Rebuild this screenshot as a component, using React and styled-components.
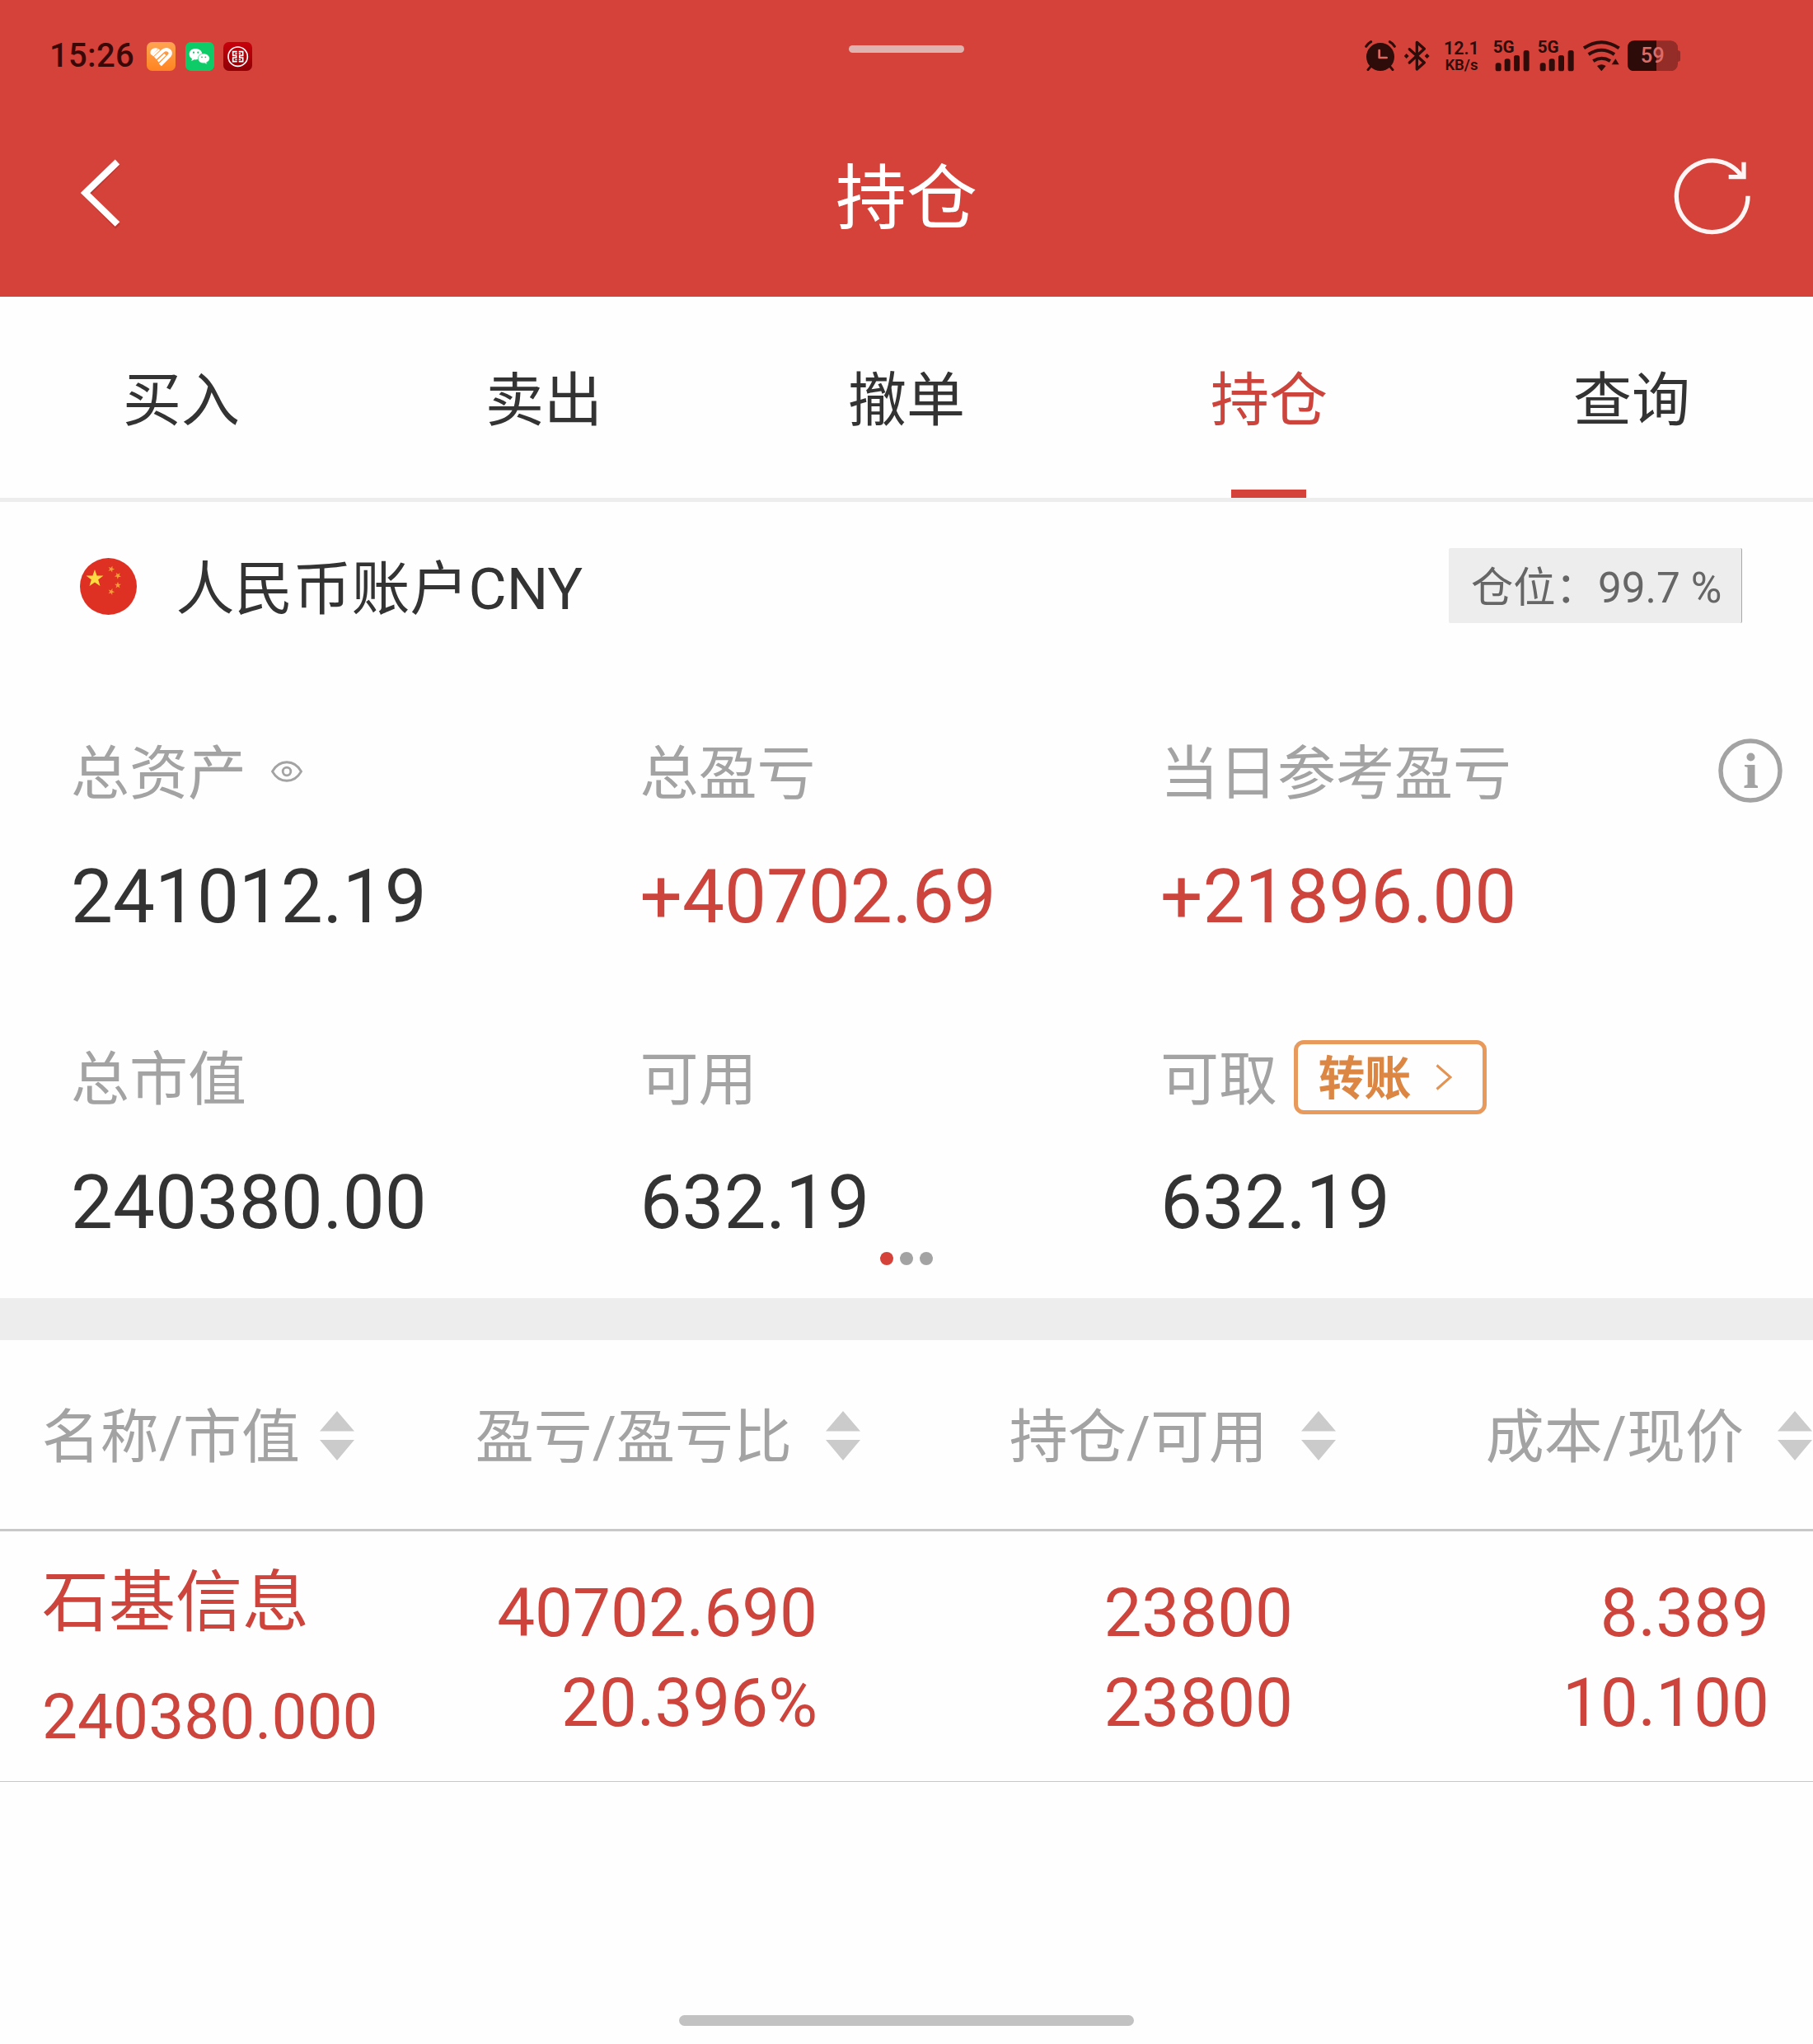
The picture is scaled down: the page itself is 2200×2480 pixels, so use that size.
import React from "react";
import styled, { createGlobalStyle } from "styled-components";

const palette = {
  brand: "#d5423a",
  rise: "#cd443c",
  ink: "#333333",
  muted: "#a3a3a3",
  band: "#ededed",
  orange: "#e79a5b",
  status: "#2d0c09",
};

const GlobalStyle = createGlobalStyle`
  * { box-sizing: border-box; }
  body {
    margin: 0;
    background: #fefefe;
    font-family: Roboto, "Noto Sans CJK SC", sans-serif;
    color: ${palette.ink};
  }
  svg { display: block; flex: none; }
`;

const Screen = styled.div`
  display: flex;
  flex-direction: column;
  width: 2200px;
  height: 2480px;
  overflow: hidden;
  background: #fefefe;
`;

/* ---------- header ---------- */

const Header = styled.header`
  height: 360px;
  background: ${palette.brand};
`;

const StatusBar = styled.div`
  display: grid;
  grid-template-columns: 1fr 140px 1fr;
  height: 120px;
`;

const StatusLeft = styled.div`
  display: flex;
  align-items: center;
  height: 38px;
  margin-top: 49px;
  padding-left: 60px;
`;

const Clock = styled.span`
  width: 118px;
  font-size: 40px;
  font-weight: 500;
  line-height: 38px;
  letter-spacing: 0.3px;
  color: #3a0806;
`;

const AppIcons = styled.div`
  display: flex;
  gap: 11.5px;
`;

const Handle = styled.div`
  width: 140px;
  height: 9px;
  margin-top: 54.5px;
  border-radius: 5px;
  background: #dfb3b0;
`;

const StatusRight = styled.div`
  display: flex;
  justify-content: flex-end;
  align-items: flex-start;
  height: 38px;
  margin-top: 48.67px;
  padding-right: 161px;
`;

const Speed = styled.div`
  display: flex;
  flex-direction: column;
  align-items: center;
  width: 39px;
  margin: 0 19.5px 0 19px;
  font-size: 21.5px;
  font-weight: 600;
  line-height: 20px;
  white-space: nowrap;
  color: ${palette.status};
`;

const SpeedUnit = styled.div`
  font-size: 18.5px;
`;

const Spacer = styled.div`
  width: ${(p) => p.$w}px;
`;

const TitleBar = styled.div`
  display: grid;
  grid-template-columns: 300px 1fr 300px;
  height: 240px;
`;

const IconButton = styled.div`
  padding: ${(p) => p.$pad};
`;

const Title = styled.h1`
  margin: 0;
  font-size: 86px;
  font-weight: 400;
  line-height: 243px;
  text-align: center;
  color: #fff;
`;

/* ---------- tabs ---------- */

const Tabs = styled.nav`
  display: grid;
  grid-template-columns: repeat(5, 1fr);
  height: 249px;
  border-bottom: 5px solid #ededed;
`;

const Tab = styled.div`
  display: flex;
  flex-direction: column;
  justify-content: space-between;
  align-items: center;
  font-size: 71px;
  line-height: 234px;
  padding-top: 9px;
  height: 244px;
  color: ${(p) => (p.$active ? palette.rise : palette.ink)};

  &::after {
    content: "";
    flex: none;
    width: 91px;
    height: 10px;
    margin: -9px 1px 0 0;
    background: ${(p) => (p.$active ? palette.brand : "transparent")};
  }
`;

/* ---------- account ---------- */

const AccountRow = styled.div`
  display: flex;
  align-items: center;
  height: 211px;
  padding: 0 86px 0 97px;

  > svg { margin-top: -6px; }
`;

const AccountName = styled.div`
  flex: 1;
  margin-left: 47.5px;
  font-size: 71px;
  line-height: 100px;
`;

const PositionBadge = styled.div`
  width: 356px;
  height: 91px;
  padding-left: 27px;
  margin-top: -8px;
  border-right: 1px solid #a8a8a8;
  border-radius: 2px;
  background: ${palette.band};
  font-size: 51.3px;
  line-height: 97px;
  white-space: pre;
  color: #666;
`;

const Metrics = styled.section`
  display: grid;
  grid-template-columns: 690.5px 631.5px 1fr;
  row-gap: 122px;
  padding: 69px 37px 0 86px;
`;

const Metric = styled.div`
  display: flex;
  flex-direction: column;
  gap: 49px;
`;

const MetricLabel = styled.div`
  display: flex;
  align-items: center;
  height: 100px;
  font-size: 71px;
  line-height: 100px;
  color: ${palette.muted};
`;

const MetricValue = styled.div`
  font-size: 90.7px;
  line-height: 100px;
  color: ${(p) => (p.$rise ? palette.rise : palette.ink)};
`;

const EyeSlot = styled.div`
  margin: -6px 0 0 30px;
`;

const InfoSlot = styled.div`
  margin: -8px 0 0 auto;
`;

const TransferButton = styled.div`
  display: flex;
  align-items: center;
  gap: 30px;
  width: 234px;
  height: 90px;
  margin: -6px 0 0 20px;
  padding-left: 25px;
  border: 5px solid ${palette.orange};
  border-radius: 12px;
  font-size: 56px;
  font-weight: 500;
  line-height: 80px;
  color: #dc8643;
`;

const TransferText = styled.span`
  padding-top: 4px;
  -webkit-text-stroke: 1.2px #dc8643;
`;

const Pager = styled.div`
  display: flex;
  justify-content: center;
  gap: 8px;
  height: 66px;
  padding-top: 10px;
`;

const Dot = styled.span`
  width: 16px;
  height: 16px;
  border-radius: 50%;
  background: ${(p) => (p.$active ? palette.brand : palette.muted)};
`;

const Band = styled.div`
  height: 51px;
  background: ${palette.band};
`;

/* ---------- holdings table ---------- */

const columns = "430px 614px 577px 578px";

const TableHead = styled.div`
  display: grid;
  grid-template-columns: ${columns};
  height: 232px;
  padding-top: 7px;
  border-bottom: 3px solid #c8c8c8;
`;

const HeadCell = styled.div`
  display: flex;
  justify-content: flex-end;
  align-items: center;
  gap: ${(p) => (p.$tight ? 24 : 41)}px;
  font-size: 71px;
  line-height: 222px;
  white-space: nowrap;
  color: ${palette.muted};

  > svg { margin-top: -5px; }
`;

const HoldingRow = styled.div`
  display: grid;
  grid-template-columns: ${columns};
  height: 304px;
  border-bottom: 1px solid #c8c8c8;
  color: ${palette.rise};
`;

const NameCell = styled.div`
  padding: 18px 0 0 51px;
  line-height: 138px;
  white-space: nowrap;
`;

const StockName = styled.div`
  font-size: 81px;
`;

const StockWorth = styled.div`
  font-size: 76.6px;
`;

const NumberCell = styled.div`
  padding: 45px 52px 0 0;
  font-size: 81.7px;
  line-height: 109px;
  text-align: right;
`;

const Footer = styled.div`
  display: flex;
  flex: 1;
  justify-content: center;
  align-items: flex-end;
  padding-bottom: 22px;
`;

const HomeBar = styled.div`
  width: 552px;
  height: 13px;
  border-radius: 7px;
  background: #c2c2c2;
`;

/* ---------- drawings ---------- */

const HeartAppIcon = () => (
  <svg width="35" height="35" viewBox="0 0 105 105">
    <defs>
      <linearGradient id="sun" x1="0" y1="0" x2="0" y2="1">
        <stop offset="0" stopColor="#ffa552" />
        <stop offset="1" stopColor="#ff8420" />
      </linearGradient>
    </defs>
    <rect width="105" height="105" rx="20" fill="url(#sun)" />
    <path d="M15 45 C8 30 24 16 42 24 L20 48Z" fill="#fff" />
    <path d="M31 58 L58 33 C72 20 95 34 83 49 L49 83" fill="none" stroke="#fff" strokeWidth="13" />
    <path d="M41 70 L67 45" fill="none" stroke="#fff" strokeWidth="9" />
    <path d="M22 50 L46 27" fill="none" stroke="#fff" strokeWidth="7" />
  </svg>
);

const ChatAppIcon = () => (
  <svg width="35" height="35" viewBox="0 0 105 105">
    <rect width="105" height="105" rx="20" fill="#0dcb67" />
    <path d="M37 24 C24 24 14 32 14 44 C14 51 18 57 24 60 L22 69 L32 64 C42 66 62 60 61 43 C60 31 49 24 37 24Z" fill="#fff" />
    <path d="M67 42 C55 42 46 50 46 60 C46 71 56 79 70 77 L79 82 L77 74 C84 71 88 66 88 59 C87 49 78 42 67 42Z" fill="#fff" stroke="#0dcb67" strokeWidth="2" />
    <g fill="#0dcb67">
      <circle cx="30" cy="38" r="3.4" /><circle cx="46" cy="38" r="3.4" />
      <circle cx="60" cy="55" r="2.8" /><circle cx="73" cy="55" r="2.8" />
    </g>
  </svg>
);

const BankAppIcon = () => (
  <svg width="35" height="35" viewBox="0 0 105 105">
    <defs>
      <linearGradient id="bank" x1="0" y1="0" x2="0" y2="1">
        <stop offset="0" stopColor="#c8000c" />
        <stop offset="1" stopColor="#8e0006" />
      </linearGradient>
    </defs>
    <rect width="105" height="105" rx="20" fill="url(#bank)" />
    <g fill="none" stroke="#fff" strokeWidth="5">
      <circle cx="53" cy="53" r="35" />
      <path d="M50 35 H35 V49 H47 V57 H35 V71 H50" />
      <path d="M56 35 H71 V49 H59 V57 H71 V71 H56" />
      <path d="M43 42 H50 M56 42 H63 M43 64 H50 M56 64 H63" strokeWidth="4" />
    </g>
  </svg>
);

const AlarmIcon = () => (
  <svg width="38" height="37.33" viewBox="48 56 114 112">
    <circle cx="105" cy="116" r="51" fill={palette.status} />
    <g stroke={palette.status} strokeWidth="9" strokeLinecap="round" fill="none">
      <path d="M53 78 Q60 67 71 61 M139 61 Q150 67 157 78 M68 153 L60 163 M142 153 L150 163" />
    </g>
    <path d="M101 92 V119 H128" fill="none" stroke="#dd6a62" strokeWidth="8" strokeLinecap="round" strokeLinejoin="round" />
  </svg>
);

const BluetoothIcon = () => (
  <svg width="30.67" height="37.33" viewBox="193 56 92 112">
    <path d="M212 88 L266 137 L239 161 V63 L266 87 L212 137" fill="none" stroke={palette.status} strokeWidth="10" strokeLinecap="round" strokeLinejoin="round" />
    <path d="M201 104 l9 9 -9 9 -9 -9Z M276 104 l9 9 -9 9 -9 -9Z" fill={palette.status} />
  </svg>
);

const SignalIcon = () => (
  <svg width="43.67" height="37.33" viewBox="517 56 131 112" overflow="visible">
    <text x="516" y="101" fontFamily="Roboto, sans-serif" fontSize="59" fontWeight="700" textLength="78" lengthAdjust="spacingAndGlyphs" fill={palette.status}>5G</text>
    <g fill={palette.status}>
      <rect x="525" y="138" width="21" height="30" rx="8" />
      <rect x="558" y="123" width="21" height="45" rx="8" />
      <rect x="592" y="110" width="21" height="58" rx="8" />
      <rect x="627" y="92" width="21" height="76" rx="8" />
    </g>
  </svg>
);

const WifiIcon = () => (
  <svg width="45" height="37.33" viewBox="842 56 135 112">
    <g fill="none" stroke={palette.status} strokeWidth="12">
      <path d="M845 84 Q909 41 973 84" />
      <path d="M862 107 Q909 75 956 107" />
      <path d="M879 131 Q909 112 941 131" />
    </g>
    <path d="M893 149 Q909 139 925 149 L909 168Z M960 123 L973 144 H946Z" fill={palette.status} />
  </svg>
);

const BatteryIcon = () => (
  <svg width="64" height="37.33" viewBox="1005 56 192 112">
    <rect x="1005" y="57" width="183" height="111" rx="26" fill="#942c28" />
    <path d="M1188 93 h2 q7 0 7 8 v24 q0 8 -7 8 h-2Z" fill="#942c28" />
    <path d="M1110 57 V168 H1031 Q1005 168 1005 142 V83 Q1005 57 1031 57Z" fill="#2d0b09" />
    <text x="1052" y="137" fontFamily="Roboto, sans-serif" fontSize="78" fontWeight="500" textLength="87" lengthAdjust="spacingAndGlyphs" fill="#dc6d66">59</text>
  </svg>
);

const BackIcon = () => (
  <svg width="50" height="86" viewBox="0 0 50 86">
    <path d="M45 5 L7 43 L45 82" fill="none" stroke="#a8332d" strokeOpacity="0.55" strokeWidth="8" />
    <path d="M44.500 3.500 L5.500 41 L44.500 79" fill="none" stroke="#fff" strokeWidth="8" />
  </svg>
);

const RefreshIcon = () => (
  <svg width="94" height="94" viewBox="0 0 282 282">
    <g fill="none" stroke="#fff5f4" strokeWidth="16">
      <path d="M270 140 A130 130 0 1 1 247 68" />
      <path d="M255 17 V71 H200" />
    </g>
  </svg>
);

const starPoints = (cx, cy, r, turn = 0) =>
  Array.from({ length: 10 }, (_, i) => {
    const radius = i % 2 ? r * 0.4 : r;
    const angle = ((i * 36 - 90 + turn) * Math.PI) / 180;
    return `${cx + radius * Math.cos(angle)},${cy + radius * Math.sin(angle)}`;
  }).join(" ");

const FlagIcon = () => (
  <svg width="69" height="69" viewBox="0 0 69 69">
    <circle cx="34.5" cy="34.5" r="34.5" fill="#df3024" />
    <polygon points={starPoints(18, 25, 11)} fill="#fddc41" />
    <g fill="#f2a035">
      <polygon points={starPoints(38, 13.5, 4.2, 20)} />
      <polygon points={starPoints(46, 21.5, 4.2, 40)} />
      <polygon points={starPoints(46, 33, 4.2)} />
      <polygon points={starPoints(38, 41, 4.2, 20)} />
    </g>
  </svg>
);

const EyeIcon = () => (
  <svg width="38" height="26" viewBox="0 0 38 26">
    <g fill="none" stroke={palette.muted} strokeWidth="2.8">
      <path d="M1.5 13 C10 -2 28 -2 36.5 13 C28 28 10 28 1.5 13Z" />
      <circle cx="19" cy="13" r="4.8" />
    </g>
  </svg>
);

const InfoIcon = () => (
  <svg width="78" height="78" viewBox="0 0 78 78">
    <circle cx="39" cy="39" r="36" fill="none" stroke={palette.muted} strokeWidth="5.5" />
    <circle cx="39.5" cy="22.5" r="5" fill={palette.muted} />
    <path d="M32 32 H44.5 V56 L48 57.5 V60 H31.5 V57.5 L35.5 56 V35 L32 34Z" fill={palette.muted} />
  </svg>
);

const ChevronIcon = () => (
  <svg width="20" height="32" viewBox="0 0 20 32">
    <path d="M1.5 1.5 L18 16 L1.5 30.5" fill="none" stroke="#e39352" strokeWidth="3" />
  </svg>
);

const SortIcon = () => (
  <svg width="42" height="60" viewBox="0 0 42 60">
    <path d="M21 0 L42 24.5 H0Z M0 35 H42 L21 60Z" fill="#cbcbcb" />
  </svg>
);

/* ---------- data ---------- */

const tabs = ["买入", "卖出", "撤单", "持仓", "查询"];

const metrics = [
  { label: "总资产", value: "241012.19", extra: <EyeSlot><EyeIcon /></EyeSlot> },
  { label: "总盈亏", value: "+40702.69", rise: true },
  { label: "当日参考盈亏", value: "+21896.00", rise: true, extra: <InfoSlot><InfoIcon /></InfoSlot> },
  { label: "总市值", value: "240380.00" },
  { label: "可用", value: "632.19" },
  {
    label: "可取",
    value: "632.19",
    extra: (
      <TransferButton>
        <TransferText>转账</TransferText>
        <ChevronIcon />
      </TransferButton>
    ),
  },
];

const headings = ["名称/市值", "盈亏/盈亏比", "持仓/可用", "成本/现价"];

const holdings = [
  {
    name: "石基信息",
    worth: "240380.000",
    cells: [["40702.690", "20.396%"], ["23800", "23800"], ["8.389", "10.100"]],
  },
];

export default function App() {
  return (
    <Screen>
      <GlobalStyle />
      <Header>
        <StatusBar>
          <StatusLeft>
            <Clock>15:26</Clock>
            <AppIcons>
              <HeartAppIcon />
              <ChatAppIcon />
              <BankAppIcon />
            </AppIcons>
          </StatusLeft>
          <Handle />
          <StatusRight>
            <AlarmIcon />
            <Spacer $w={10.3} />
            <BluetoothIcon />
            <Speed>
              12.1
              <SpeedUnit>KB/s</SpeedUnit>
            </Speed>
            <SignalIcon />
            <Spacer $w={10.3} />
            <SignalIcon />
            <Spacer $w={10.7} />
            <WifiIcon />
            <Spacer $w={9.3} />
            <BatteryIcon />
          </StatusRight>
        </StatusBar>
        <TitleBar>
          <IconButton $pad="73px 0 0 98px"><BackIcon /></IconButton>
          <Title>持仓</Title>
          <IconButton $pad="71px 0 0 131px"><RefreshIcon /></IconButton>
        </TitleBar>
      </Header>

      <Tabs>
        {tabs.map((tab, i) => (
          <Tab key={tab} $active={i === 3}>{tab}</Tab>
        ))}
      </Tabs>

      <AccountRow>
        <FlagIcon />
        <AccountName>人民币账户CNY</AccountName>
        <PositionBadge>仓位：99.7 %</PositionBadge>
      </AccountRow>

      <Metrics>
        {metrics.map((m) => (
          <Metric key={m.label}>
            <MetricLabel>
              {m.label}
              {m.extra}
            </MetricLabel>
            <MetricValue $rise={m.rise}>{m.value}</MetricValue>
          </Metric>
        ))}
      </Metrics>

      <Pager>
        <Dot $active />
        <Dot />
        <Dot />
      </Pager>
      <Band />

      <TableHead>
        {headings.map((h, i) => (
          <HeadCell key={h} $tight={i === 0}>
            {h}
            <SortIcon />
          </HeadCell>
        ))}
      </TableHead>
      {holdings.map((h) => (
        <HoldingRow key={h.name}>
          <NameCell>
            <StockName>{h.name}</StockName>
            <StockWorth>{h.worth}</StockWorth>
          </NameCell>
          {h.cells.map((lines, i) => (
            <NumberCell key={i}>
              {lines.map((line, j) => (
                <div key={j}>{line}</div>
              ))}
            </NumberCell>
          ))}
        </HoldingRow>
      ))}

      <Footer>
        <HomeBar />
      </Footer>
    </Screen>
  );
}
